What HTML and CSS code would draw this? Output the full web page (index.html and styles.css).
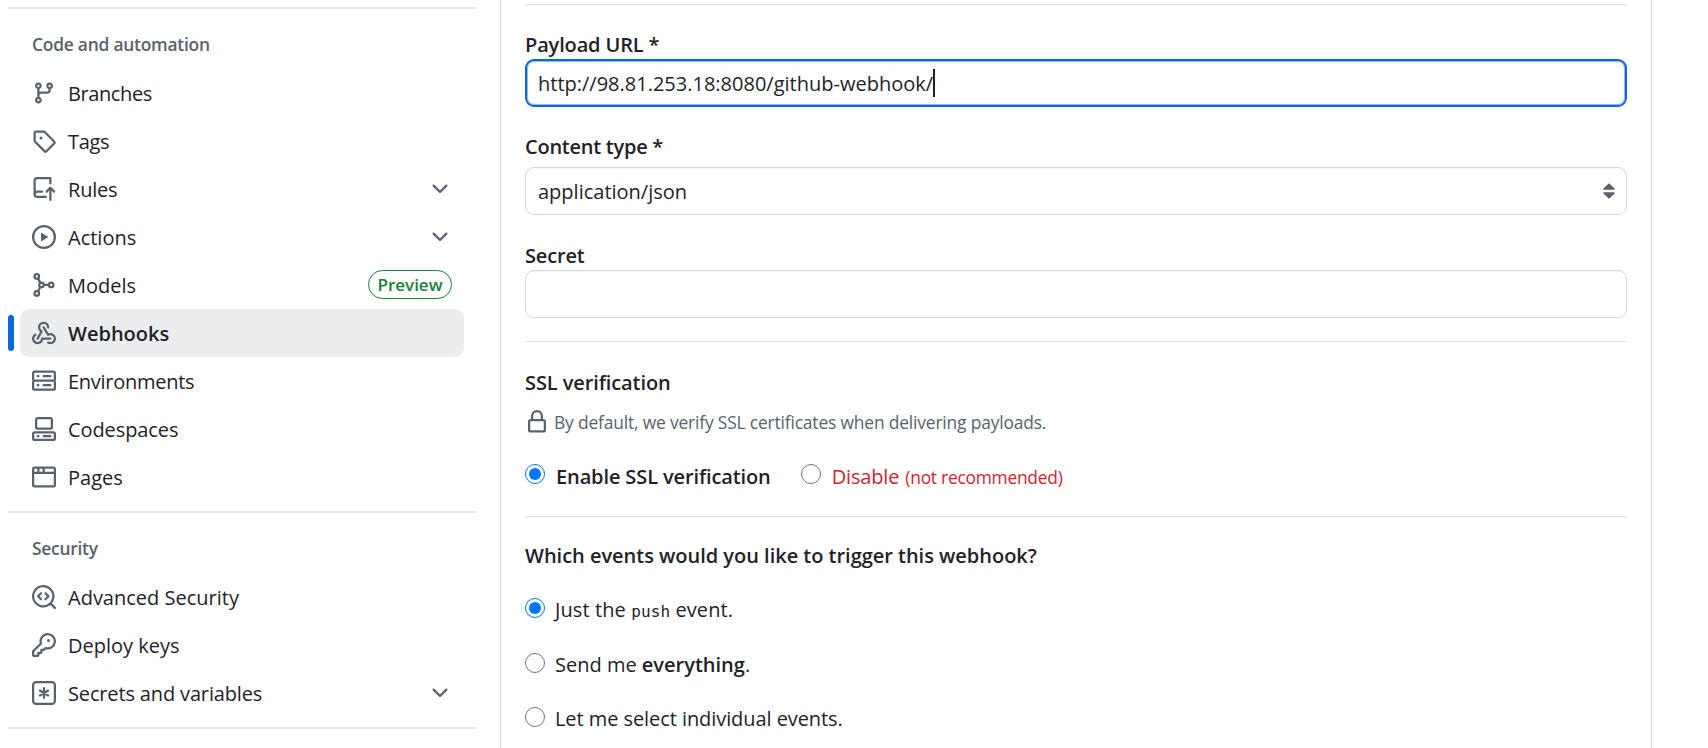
FILE: index.html
```html
<!DOCTYPE html>
<html lang="en">
<head>
<meta charset="utf-8">
<title>Webhooks settings</title>
<link rel="stylesheet" href="styles.css">
</head>
<body>
<div class="page">
  <nav class="sidebar">
    <section class="group">
      <h3 class="group-title"><span class="t-code">Code and automation</span></h3>
      <a class="item"><svg class="icon" viewBox="0 0 16 16"><path d="M9.5 3.25a2.25 2.25 0 1 1 3 2.122V6A2.5 2.5 0 0 1 10 8.5H6a1 1 0 0 0-1 1v1.128a2.251 2.251 0 1 1-1.5 0V5.372a2.25 2.25 0 1 1 1.5 0v1.836A2.493 2.493 0 0 1 6 7h4a1 1 0 0 0 1-1v-.628A2.25 2.25 0 0 1 9.5 3.25Zm-6 0a.75.75 0 1 0 1.5 0 .75.75 0 0 0-1.5 0Zm8.25-.75a.75.75 0 1 0 0 1.5.75.75 0 0 0 0-1.5ZM4.25 12a.75.75 0 1 0 0 1.5.75.75 0 0 0 0-1.5Z"/></svg><span class="t-branches">Branches</span></a>
      <a class="item"><svg class="icon" viewBox="0 0 16 16"><path d="M1 7.775V2.75C1 1.784 1.784 1 2.75 1h5.025c.464 0 .91.184 1.238.513l6.25 6.25a1.75 1.75 0 0 1 0 2.474l-5.026 5.026a1.75 1.75 0 0 1-2.474 0l-6.25-6.25A1.752 1.752 0 0 1 1 7.775Zm1.5 0c0 .066.026.13.073.177l6.25 6.25a.25.25 0 0 0 .354 0l5.025-5.025a.25.25 0 0 0 0-.354l-6.25-6.25a.25.25 0 0 0-.177-.073H2.75a.25.25 0 0 0-.25.25ZM6 5a1 1 0 1 1 0 2 1 1 0 0 1 0-2Z"/></svg><span class="t-tags">Tags</span></a>
      <a class="item"><svg class="icon" viewBox="0 0 16 16"><path d="M1 2.5A2.5 2.5 0 0 1 3.5 0h8.75a.75.75 0 0 1 .75.75v3.5a.75.75 0 0 1-1.5 0V1.5h-8a1 1 0 0 0-1 1v6.708A2.493 2.493 0 0 1 3.5 9h3.25a.75.75 0 0 1 0 1.5H3.5a1 1 0 0 0 0 2h5.75a.75.75 0 0 1 0 1.5H3.5A2.5 2.5 0 0 1 1 11.5Zm13.23 7.79h-.001l-1.224-1.224v6.184a.75.75 0 0 1-1.5 0V9.066L10.28 10.29a.75.75 0 0 1-1.06-1.061l2.505-2.504a.75.75 0 0 1 1.06 0L15.29 9.23a.751.751 0 0 1-.018 1.042.751.751 0 0 1-1.042.018Z"/></svg><span class="t-rules">Rules</span><svg class="icon chevron" viewBox="0 0 16 16"><path d="M12.78 5.22a.749.749 0 0 1 0 1.06l-4.25 4.25a.749.749 0 0 1-1.06 0L3.22 6.28a.749.749 0 1 1 1.06-1.06L8 8.939l3.72-3.719a.749.749 0 0 1 1.06 0Z"/></svg></a>
      <a class="item"><svg class="icon" viewBox="0 0 16 16"><path d="M8 0a8 8 0 1 1 0 16A8 8 0 0 1 8 0ZM1.5 8a6.5 6.5 0 1 0 13 0 6.5 6.5 0 0 0-13 0Zm4.879-2.773 4.264 2.559a.25.25 0 0 1 0 .428l-4.264 2.559A.25.25 0 0 1 6 10.559V5.442a.25.25 0 0 1 .379-.215Z"/></svg><span class="t-actions">Actions</span><svg class="icon chevron" viewBox="0 0 16 16"><path d="M12.78 5.22a.749.749 0 0 1 0 1.06l-4.25 4.25a.749.749 0 0 1-1.06 0L3.22 6.28a.749.749 0 1 1 1.06-1.06L8 8.939l3.72-3.719a.749.749 0 0 1 1.06 0Z"/></svg></a>
      <a class="item"><svg class="icon line" viewBox="0 0 16 16"><circle cx="3.2" cy="2.3" r="1.5"/><circle cx="3.2" cy="13.6" r="1.5"/><circle cx="6.3" cy="7.95" r="1.5"/><circle cx="12.8" cy="7.95" r="1.5"/><path d="M3.95 3.6 5.55 6.6M3.95 12.3 5.55 9.3M7.8 7.95h3.5"/></svg><span class="t-models">Models</span><span class="pill"><span class="t-preview">Preview</span></span></a>
      <a class="item active"><svg class="icon" viewBox="0 0 16 16"><path d="M5.5 4.25a2.25 2.25 0 0 1 4.5 0 .75.75 0 0 0 1.5 0 3.75 3.75 0 1 0-6.14 2.889l-2.272 4.258a.75.75 0 0 0 1.324.706L7 7.25a.75.75 0 0 0-.309-1.015A2.25 2.25 0 0 1 5.5 4.25Z"/><path d="M7.364 3.607a.75.75 0 0 1 1.03.257l2.608 4.349a3.75 3.75 0 1 1-.628 6.785.75.75 0 0 1 .752-1.299 2.25 2.25 0 1 0-.033-3.88.75.75 0 0 1-1.03-.256L7.107 4.636a.75.75 0 0 1 .257-1.03Z"/><path d="M2.9 8.776A.75.75 0 0 1 2.625 9.8 2.25 2.25 0 1 0 6 11.75a.75.75 0 0 1 .75-.751h5.5a.75.75 0 0 1 0 1.5H7.425a3.751 3.751 0 1 1-5.55-3.998.75.75 0 0 1 1.024.274Z"/></svg><span class="t-webhooks">Webhooks</span></a>
      <a class="item"><svg class="icon" viewBox="0 0 16 16"><path d="M1.75 1h12.5c.966 0 1.75.784 1.75 1.75v4c0 .372-.116.717-.314 1 .198.283.314.628.314 1v4a1.75 1.75 0 0 1-1.75 1.75H1.75A1.75 1.75 0 0 1 0 12.75v-4c0-.358.109-.707.314-1a1.739 1.739 0 0 1-.314-1v-4C0 1.784.784 1 1.75 1ZM1.5 2.75v4c0 .138.112.25.25.25h12.5a.25.25 0 0 0 .25-.25v-4a.25.25 0 0 0-.25-.25H1.75a.25.25 0 0 0-.25.25Zm.25 5.75a.25.25 0 0 0-.25.25v4c0 .138.112.25.25.25h12.5a.25.25 0 0 0 .25-.25v-4a.25.25 0 0 0-.25-.25ZM7 4.75A.75.75 0 0 1 7.75 4h4.5a.75.75 0 0 1 0 1.5h-4.5A.75.75 0 0 1 7 4.75ZM7.75 10h4.5a.75.75 0 0 1 0 1.5h-4.5a.75.75 0 0 1 0-1.5ZM3 4.75A.75.75 0 0 1 3.75 4h.5a.75.75 0 0 1 0 1.5h-.5A.75.75 0 0 1 3 4.75ZM3.75 10h.5a.75.75 0 0 1 0 1.5h-.5a.75.75 0 0 1 0-1.5Z"/></svg><span class="t-env">Environments</span></a>
      <a class="item"><svg class="icon" viewBox="0 0 16 16"><path d="M0 11.25c0-.966.784-1.75 1.75-1.75h12.5c.966 0 1.75.784 1.75 1.75v3A1.75 1.75 0 0 1 14.25 16H1.75A1.75 1.75 0 0 1 0 14.25Zm2-9.5C2 .784 2.784 0 3.75 0h8.5C13.216 0 14 .784 14 1.75v5a1.75 1.75 0 0 1-1.75 1.75h-8.5A1.75 1.75 0 0 1 2 6.75Zm1.75-.25a.25.25 0 0 0-.25.25v5c0 .138.112.25.25.25h8.5a.25.25 0 0 0 .25-.25v-5a.25.25 0 0 0-.25-.25Zm-2 9.5a.25.25 0 0 0-.25.25v3c0 .138.112.25.25.25h12.5a.25.25 0 0 0 .25-.25v-3a.25.25 0 0 0-.25-.25Z"/><path d="M7 12.75a.75.75 0 0 1 .75-.75h4.5a.75.75 0 0 1 0 1.5h-4.5a.75.75 0 0 1-.75-.75Zm-4 0a.75.75 0 0 1 .75-.75h.5a.75.75 0 0 1 0 1.5h-.5a.75.75 0 0 1-.75-.75Z"/></svg><span class="t-spaces">Codespaces</span></a>
      <a class="item"><svg class="icon" viewBox="0 0 16 16"><path d="M0 2.75C0 1.784.784 1 1.75 1h12.5c.966 0 1.75.784 1.75 1.75v10.5A1.75 1.75 0 0 1 14.25 15H1.75A1.75 1.75 0 0 1 0 13.25ZM14.5 6h-13v7.25c0 .138.112.25.25.25h12.5a.25.25 0 0 0 .25-.25Zm-6-3.5v2h6V2.75a.25.25 0 0 0-.25-.25ZM5 2.5v2h2v-2Zm-3.25 0a.25.25 0 0 0-.25.25V4.5h2v-2Z"/></svg><span class="t-pages">Pages</span></a>
    </section>
    <section class="group">
      <h3 class="group-title"><span class="t-security">Security</span></h3>
      <a class="item"><svg class="icon" viewBox="0 0 16 16"><path d="M8.47 4.97a.75.75 0 0 0 0 1.06L9.94 7.5 8.47 8.97a.75.75 0 1 0 1.06 1.06l2-2a.75.75 0 0 0 0-1.06l-2-2a.75.75 0 0 0-1.06 0ZM6.53 6.03a.75.75 0 0 0-1.06-1.06l-2 2a.75.75 0 0 0 0 1.06l2 2a.75.75 0 1 0 1.06-1.06L5.06 7.5l1.47-1.47Z"/><path d="M12.246 13.307a7.501 7.501 0 1 1 1.06-1.06l2.474 2.473a.749.749 0 0 1-.326 1.275.749.749 0 0 1-.734-.215ZM1.5 7.5a6.002 6.002 0 0 0 3.608 5.504 6.002 6.002 0 0 0 6.486-1.117.748.748 0 0 1 .292-.293A6 6 0 1 0 1.5 7.5Z"/></svg><span class="t-advanced">Advanced Security</span></a>
      <a class="item"><svg class="icon" viewBox="0 0 16 16"><path d="M10.5 0a5.499 5.499 0 1 1-1.288 10.848l-.932.932a.749.749 0 0 1-.53.22H7v.75a.749.749 0 0 1-.22.53l-.5.5a.749.749 0 0 1-.53.22H5v.75a.749.749 0 0 1-.22.53l-.5.5a.749.749 0 0 1-.53.22h-2A1.75 1.75 0 0 1 0 14.25v-2c0-.199.079-.389.22-.53l4.932-4.932A5.5 5.5 0 0 1 10.5 0Zm-4 5.5c-.001.431.069.86.205 1.269a.75.75 0 0 1-.181.768L1.5 12.56v1.69c0 .138.112.25.25.25h1.69l.06-.06v-1.19a.75.75 0 0 1 .75-.75h1.19l.06-.06v-1.19a.75.75 0 0 1 .75-.75h1.19l1.023-1.025a.75.75 0 0 1 .768-.18A4 4 0 1 0 6.5 5.5ZM11 6a1 1 0 1 1 0-2 1 1 0 0 1 0 2Z"/></svg><span class="t-deploy">Deploy keys</span></a>
      <a class="item"><svg class="icon line" viewBox="0 0 16 16"><rect x=".75" y=".75" width="14.5" height="14.5" rx="2"/><path stroke-linecap="round" d="M8 4.8v6.4M5.2 6.4l5.6 3.2M10.8 6.4 5.2 9.6"/></svg><span class="t-secrets">Secrets and variables</span><svg class="icon chevron" viewBox="0 0 16 16"><path d="M12.78 5.22a.749.749 0 0 1 0 1.06l-4.25 4.25a.749.749 0 0 1-1.06 0L3.22 6.28a.749.749 0 1 1 1.06-1.06L8 8.939l3.72-3.719a.749.749 0 0 1 1.06 0Z"/></svg></a>
    </section>
    <section class="group"></section>
  </nav>

  <main class="panel">
    <form class="form">
      <hr class="rule rule-top">
      <label class="label"><span class="t-payload">Payload URL *</span></label>
      <div class="field focused"><span class="t-url">http://98.81.253.18:8080/github-webhook/</span><i class="caret"></i></div>
      <label class="label label-type"><span class="t-type">Content type *</span></label>
      <div class="field select"><span class="t-json">application/json</span><svg class="sorter" width="12" height="16" viewBox="0 0 12 16"><path d="M6 .3 11.6 5.6Q12 6.8 11 6.8H1Q0 6.8.4 5.6ZM6 15.7 11.6 10.4Q12 9.2 11 9.2H1Q0 9.2.4 10.4Z"/></svg></div>
      <label class="label label-secret"><span class="t-secret">Secret</span></label>
      <div class="field"></div>
      <hr class="rule rule-mid">
      <div class="label label-ssl"><span class="t-ssl">SSL verification</span></div>
      <p class="note"><svg class="icon" viewBox="0 0 16 16"><path d="M4 4a4 4 0 0 1 8 0v2h.25c.966 0 1.75.784 1.75 1.75v5.5A1.75 1.75 0 0 1 12.25 15h-8.5A1.75 1.75 0 0 1 2 13.25v-5.5C2 6.784 2.784 6 3.75 6H4Zm8.25 3.5h-8.5a.25.25 0 0 0-.25.25v5.5c0 .138.112.25.25.25h8.5a.25.25 0 0 0 .25-.25v-5.5a.25.25 0 0 0-.25-.25ZM10.5 6V4a2.5 2.5 0 1 0-5 0v2Z"/></svg><span class="t-note">By default, we verify SSL certificates when delivering payloads.</span></p>
      <div class="ssl-choices">
        <label class="choice strong"><input type="radio" name="ssl" checked><span class="t-enable">Enable SSL verification</span></label>
        <label class="choice danger"><input type="radio" name="ssl"><span class="t-disable">Disable</span><small class="t-notrec">(not recommended)</small></label>
      </div>
      <hr class="rule rule-low">
      <div class="label label-events"><span class="t-which">Which events would you like to trigger this webhook?</span></div>
      <div class="events">
        <label class="choice"><input type="radio" name="event" checked><span class="t-push">Just the <code>push</code> event.</span></label>
        <label class="choice"><input type="radio" name="event"><span class="t-all">Send me <b>everything</b>.</span></label>
        <label class="choice"><input type="radio" name="event"><span class="t-some">Let me select individual events.</span></label>
      </div>
    </form>
  </main>
</div>
</body>
</html>
```
FILE: styles.css
```css
* { box-sizing: border-box; }

body {
  margin: 0;
  height: 748px;
  overflow: hidden;
  background: #fff;
  color: #1f2328;
  font: 20px/30px "Open Sans", "Noto Sans", sans-serif;
  white-space: nowrap;
}

.page { display: flex; height: 748px; }

/* Sidebar */
.sidebar { width: 476px; padding: 7px 0 0 8px; flex: none; }
.group { border-top: 2px solid #dfe4e9; height: 504px; }
.group:nth-child(2) { height: 216px; }
.group:last-child { height: 2px; }
.group-title {
  margin: 0;
  padding: 20px 0 0 24px;
  height: 60px;
  font-size: 17.4px;
  line-height: 30px;
  font-weight: 600;
  color: #59636e;
}
.item {
  position: relative;
  display: flex;
  align-items: center;
  gap: 12px;
  height: 48px;
  margin: 0 12px;
  padding: 0 12px;
  border-radius: 9px;
}
.item > span:not(.pill) { padding-top: 2px; }
.active { background: #ecedef; font-weight: 600; }
.active::before {
  content: "";
  position: absolute;
  left: -12px;
  top: 6px;
  width: 6px;
  height: 36px;
  border-radius: 3px;
  background: #0969da;
}
.icon { width: 24px; height: 24px; flex: none; fill: #59636e; }
.line { fill: none; stroke: #59636e; stroke-width: 1.5; }
.chevron { margin-left: auto; }
.pill {
  margin: 0 0 1px auto;
  display: flex;
  align-items: center;
  justify-content: center;
  width: 84px;
  height: 29px;
  border: 1px solid #1a7f37;
  border-radius: 15px;
  color: #1a7f37;
  font-size: 17px;
  font-weight: 600;
}

/* Form panel */
.panel {
  width: 1152px;
  margin-left: 24px;
  padding: 4px 24px 0;
  border: solid #d1d9e0;
  border-width: 0 1px;
}
.rule { height: 1px; margin: 0; border: 0; background: #dce2e8; }
.label { display: block; height: 30px; padding-top: 1px; font-weight: 600; }
.rule-top { margin-bottom: 24px; }
.field {
  display: flex;
  align-items: center;
  height: 48px;
  padding: 0 12px;
  border: 1px solid #d1d9e0;
  border-radius: 9px;
  box-shadow: inset 0 1px 1px #f3f5f7;
}
.field span { padding-top: 2px; }
.focused { border: 2px solid #0969da; padding: 0 11px; box-shadow: inset 0 0 0 1px #8fbcef; }
.caret { width: 2px; height: 28px; background: #1f2328; }
.label-type { margin: 24px 0 6px; }
.select { justify-content: space-between; padding-right: 11px; }
.sorter { fill: #59636e; }
.label-secret { margin-top: 25px; }
.rule-mid { margin: 23px 0 25px; }
.note { display: flex; gap: 5px; height: 24px; margin: 13px 0 0; font-size: 17.4px; line-height: 24px; color: #59636e; }
.ssl-choices { display: flex; gap: 30px; margin-top: 26px; }
.choice { display: flex; height: 30px; }
.choice input { width: 20px; height: 20px; margin: 4px 11px 0 0; flex: none; }
.ssl-choices span, .ssl-choices small { padding-top: 2px; }
.strong { font-weight: 600; }
.danger { color: #d1242f; }
.danger small { font-size: 17.4px; margin-left: 6px; }
.rule-low { margin: 26px 0 23px; }
.events { display: flex; flex-direction: column; gap: 24.5px; margin-top: 24px; }
.events span { padding-top: 1px; }
.events input { margin-right: 10px; }
code { font: 16px "DejaVu Sans Mono", monospace; }
b { font-weight: 600; }

/* Tracking */
.t-code { letter-spacing: -.23px; }
.t-security { letter-spacing: -.25px; }
.t-branches { letter-spacing: -.4px; }
.t-tags { letter-spacing: -.3px; }
.t-rules { letter-spacing: -.2px; }
.t-env { letter-spacing: -.27px; }
.t-spaces { letter-spacing: -.1px; }
.t-secrets { letter-spacing: -.15px; }
.t-payload { letter-spacing: -.15px; }
.t-type { letter-spacing: -.25px; }
.t-secret { letter-spacing: -.17px; }
.t-ssl { letter-spacing: -.1px; }
.t-note { letter-spacing: -.165px; }
.t-enable { letter-spacing: -.12px; }
.t-disable { letter-spacing: -.15px; }
.t-notrec { letter-spacing: -.25px; }
.t-which { letter-spacing: -.02px; }
.t-push { letter-spacing: .1px; }
.t-some { letter-spacing: -.07px; }
```
